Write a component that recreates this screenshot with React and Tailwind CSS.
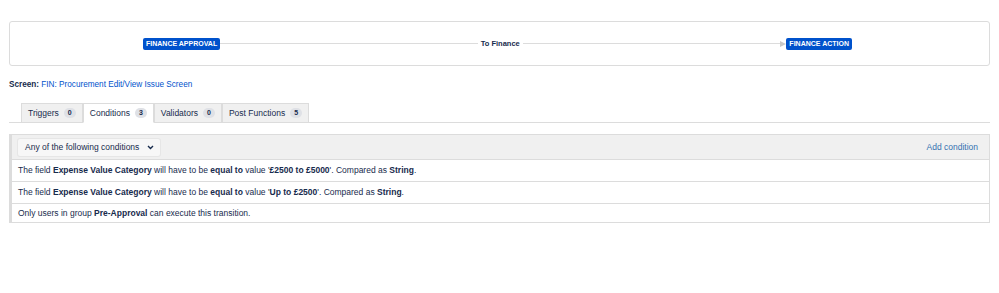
const tabs = [
  { label: 'Triggers', count: 0 },
  { label: 'Conditions', count: 3, active: true },
  { label: 'Validators', count: 0 },
  { label: 'Post Functions', count: 5 },
];

function Status({ children }) {
  return (
    <span className="rounded-[2px] bg-[#0052cc] px-[3px] py-[1px] text-[7px] font-bold uppercase leading-[10px] text-white">
      {children}
    </span>
  );
}

export default function App() {
  return (
    <div
      className="min-h-[293px] bg-white px-[9px] pt-[21px] text-[8.5px] text-[#172b4d]"
      style={{ fontFamily: '"Liberation Sans", Arial, sans-serif' }}
    >
      {/* Transition diagram */}
      <div className="flex h-[45px] items-center rounded-[3px] border border-[#dcdcdc] pl-[133px] pr-[137px]">
        <Status>Finance Approval</Status>
        <div className="h-px flex-1 bg-[#dcdcdc]" />
        <span className="px-[3px] text-[7.5px] font-bold">To Finance</span>
        <div className="h-px flex-1 bg-[#dcdcdc]" />
        <div className="h-0 w-0 border-y-[3px] border-l-[6px] border-y-transparent border-l-[#c8c8c8]" />
        <Status>Finance Action</Status>
      </div>

      <p className="mt-[13px] text-[8.2px] leading-[12px]">
        <span className="font-bold">Screen:</span>{' '}
        <span className="text-[#0052cc]">FIN: Procurement Edit/View Issue Screen</span>
      </p>

      {/* Tabs */}
      <div className="mt-[12px] flex border-b border-[#dcdcdc] pl-[12px]">
        {tabs.map((t) => (
          <div
            key={t.label}
            className={`-mb-px flex h-[20px] items-center gap-[5px] border border-[#dcdcdc] px-[6px] ${
              t.active ? 'border-b-white bg-white' : 'bg-[#f0f0f0]'
            }`}
          >
            <span>{t.label}</span>
            <span className="rounded-full bg-[#dfe1e6] px-[4px] text-[7px] font-bold leading-[10px]">
              {t.count}
            </span>
          </div>
        ))}
      </div>

      {/* Conditions */}
      <div className="mt-[11px] border border-l-[3px] border-[#dcdcdc]">
        <div className="flex h-[24px] items-center justify-between bg-[#f0f0f0] pl-[6px] pr-[11px]">
          <div className="flex h-[17px] items-center gap-[8px] rounded-[2px] bg-[#f7f7f7] pl-[7px] pr-[6px] shadow-[0_0_0_1px_#e6e6e6]">
            <span>Any of the following conditions</span>
            <svg width="7" height="5" viewBox="0 0 7 5">
              <path d="M1 1l2.5 2.5L6 1" fill="none" stroke="#172b4d" strokeWidth="1.4" />
            </svg>
          </div>
          <span className="text-[#3572b0]">Add condition</span>
        </div>
        <div className="flex h-[22px] items-center border-t border-[#dcdcdc] px-[6px]">
          <span>
            The field <b>Expense Value Category</b> will have to be <b>equal to</b> value '<b>£2500 to £5000</b>'. Compared as <b>String</b>.
          </span>
        </div>
        <div className="flex h-[22px] items-center border-t border-[#dcdcdc] px-[6px]">
          <span>
            The field <b>Expense Value Category</b> will have to be <b>equal to</b> value '<b>Up to £2500</b>'. Compared as <b>String</b>.
          </span>
        </div>
        <div className="flex h-[19px] items-center border-t border-[#dcdcdc] px-[6px]">
          <span>
            Only users in group <b>Pre-Approval</b> can execute this transition.
          </span>
        </div>
      </div>
    </div>
  );
}
